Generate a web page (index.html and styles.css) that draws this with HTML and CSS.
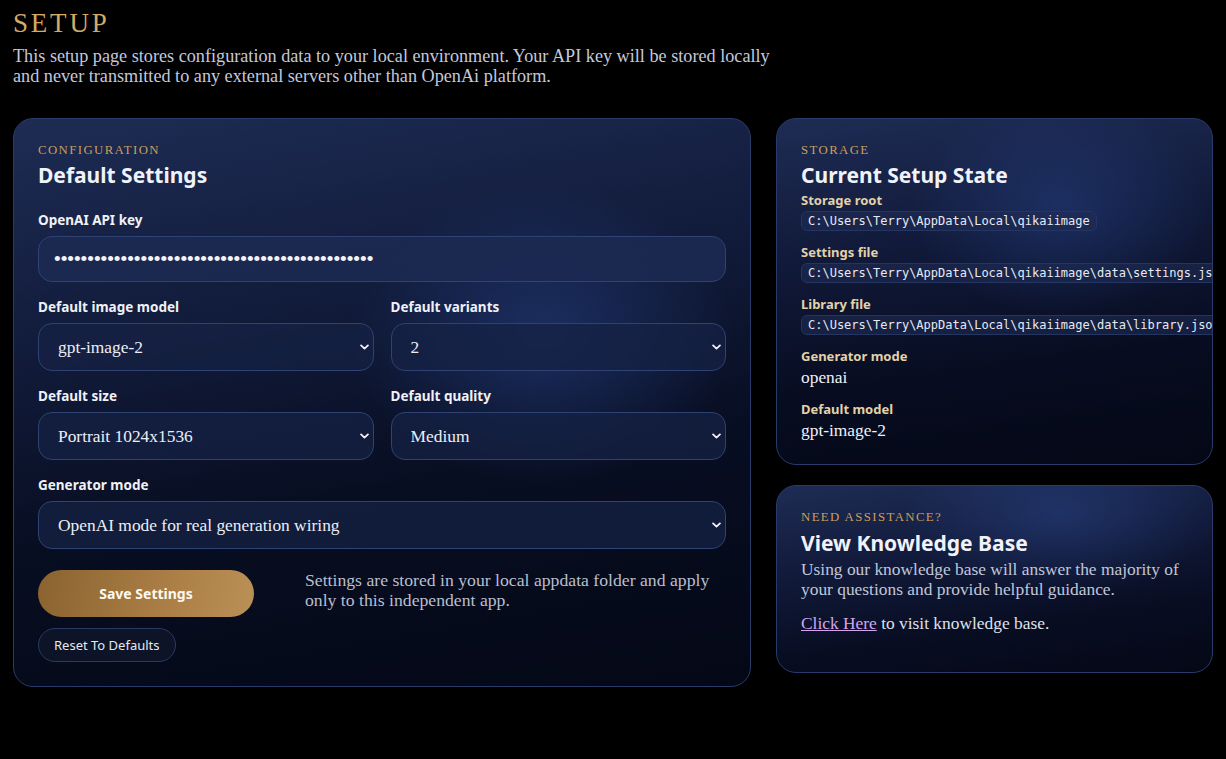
FILE: index.html
```html
<!DOCTYPE html>
<html lang="en">
<head>
<meta charset="utf-8">
<title>Setup</title>
<link rel="stylesheet" href="styles.css">
</head>
<body>
<header class="page-head">
  <h1 class="page-title">SETUP</h1>
  <p class="page-intro">This setup page stores configuration data to your local environment. Your API key will be stored locally and never transmitted to any external servers other than OpenAi platform.</p>
</header>
<main class="layout">
  <section class="card card-config">
    <div class="eyebrow">CONFIGURATION</div>
    <h2 class="card-title">Default Settings</h2>
    <div class="field field-first">
      <label class="field-label">OpenAI API key</label>
      <input class="text-input" type="password" value="sk-proj-abcdefghijklmnopqrstuvwxyz0123456789ABCD">
    </div>
    <div class="field-row">
      <div class="field">
        <label class="field-label">Default image model</label>
        <div class="select-wrap">
          <select class="select"><option>gpt-image-2</option></select>
          <svg class="chev" viewBox="0 0 10 6" width="9" height="6"><path d="M1.2 1.2l3.8 3.6 3.8-3.6" fill="none" stroke="currentColor" stroke-width="2" stroke-linecap="round" stroke-linejoin="round"/></svg>
        </div>
      </div>
      <div class="field">
        <label class="field-label">Default variants</label>
        <div class="select-wrap">
          <select class="select"><option>2</option></select>
          <svg class="chev" viewBox="0 0 10 6" width="9" height="6"><path d="M1.2 1.2l3.8 3.6 3.8-3.6" fill="none" stroke="currentColor" stroke-width="2" stroke-linecap="round" stroke-linejoin="round"/></svg>
        </div>
      </div>
    </div>
    <div class="field-row">
      <div class="field">
        <label class="field-label">Default size</label>
        <div class="select-wrap">
          <select class="select"><option>Portrait 1024x1536</option></select>
          <svg class="chev" viewBox="0 0 10 6" width="9" height="6"><path d="M1.2 1.2l3.8 3.6 3.8-3.6" fill="none" stroke="currentColor" stroke-width="2" stroke-linecap="round" stroke-linejoin="round"/></svg>
        </div>
      </div>
      <div class="field">
        <label class="field-label">Default quality</label>
        <div class="select-wrap">
          <select class="select"><option>Medium</option></select>
          <svg class="chev" viewBox="0 0 10 6" width="9" height="6"><path d="M1.2 1.2l3.8 3.6 3.8-3.6" fill="none" stroke="currentColor" stroke-width="2" stroke-linecap="round" stroke-linejoin="round"/></svg>
        </div>
      </div>
    </div>
    <div class="field">
      <label class="field-label">Generator mode</label>
      <div class="select-wrap">
        <select class="select"><option>OpenAI mode for real generation wiring</option></select>
        <svg class="chev" viewBox="0 0 10 6" width="9" height="6"><path d="M1.2 1.2l3.8 3.6 3.8-3.6" fill="none" stroke="currentColor" stroke-width="2" stroke-linecap="round" stroke-linejoin="round"/></svg>
      </div>
    </div>
    <div class="actions">
      <div class="buttons">
        <button class="btn-primary">Save Settings</button>
        <button class="btn-ghost">Reset To Defaults</button>
      </div>
      <p class="actions-note">Settings are stored in your local appdata folder and apply only to this independent app.</p>
    </div>
  </section>
  <aside class="side">
    <section class="card card-storage">
      <div class="eyebrow">STORAGE</div>
      <h2 class="card-title">Current Setup State</h2>
      <dl class="state">
        <dt class="state-label">Storage root</dt>
        <dd class="state-code"><code class="code">C:\Users\Terry\AppData\Local\qikaiimage</code></dd>
        <dt class="state-label">Settings file</dt>
        <dd class="state-code"><code class="code">C:\Users\Terry\AppData\Local\qikaiimage\data\settings.json</code></dd>
        <dt class="state-label">Library file</dt>
        <dd class="state-code"><code class="code">C:\Users\Terry\AppData\Local\qikaiimage\data\library.json</code></dd>
        <dt class="state-label">Generator mode</dt>
        <dd class="state-value">openai</dd>
        <dt class="state-label">Default model</dt>
        <dd class="state-value">gpt-image-2</dd>
      </dl>
    </section>
    <section class="card card-help">
      <div class="eyebrow">NEED ASSISTANCE?</div>
      <h2 class="card-title help-title">View Knowledge Base</h2>
      <p class="help-text">Using our knowledge base will answer the majority of your questions and provide helpful guidance.</p>
      <p class="help-text help-link-line"><a class="help-link" href="#">Click Here</a> to visit knowledge base.</p>
    </section>
  </aside>
</main>
</body>
</html>
```

FILE: styles.css
```css
* { box-sizing: border-box; }

html, body {
  margin: 0;
  background: #000;
}

body {
  padding: 0 13px;
  font-family: "Liberation Serif", Georgia, serif;
  color: #c9cfe0;
}

.page-head {
  padding-top: 7px;
}

.page-title {
  margin: 0;
  font-family: "Liberation Serif", Georgia, serif;
  font-weight: 400;
  font-size: 27px;
  line-height: 32px;
  letter-spacing: 2.8px;
  color: #d4ab66;
}

.page-intro {
  margin: 7px 0 0;
  max-width: 785px;
  font-size: 18.2px;
  line-height: 20px;
  color: #c3c9dc;
}

.layout {
  display: grid;
  grid-template-columns: 738px 437px;
  column-gap: 25px;
  margin-top: 32px;
  align-items: start;
}

.card {
  position: relative;
  border: 1px solid #2a3b6a;
  border-radius: 20px;
  padding: 23px 24px 24px;
  overflow: hidden;
}

.card-config {
  height: 569px;
  background:
    radial-gradient(ellipse 190px 150px at 72% 38%, rgba(36, 62, 128, 0.6), rgba(36, 62, 128, 0) 100%),
    linear-gradient(170deg, #1e2c54 0%, #121c3c 32%, #080e22 62%, #040816 100%);
}

.card-storage {
  height: 347px;
  padding-right: 0;
  background:
    radial-gradient(ellipse 150px 110px at 65% 25%, rgba(36, 62, 128, 0.55), rgba(36, 62, 128, 0) 100%),
    linear-gradient(172deg, #1e2c54 0%, #111a3a 35%, #070c20 70%, #040816 100%);
}

.card-help {
  height: 188px;
  background:
    radial-gradient(ellipse 160px 80px at 65% 15%, rgba(40, 66, 132, 0.55), rgba(40, 66, 132, 0) 100%),
    linear-gradient(172deg, #1e2c54 0%, #121b3c 35%, #080d22 70%, #040816 100%);
}

.eyebrow {
  font-family: "Liberation Serif", Georgia, serif;
  font-size: 12.8px;
  line-height: 16px;
  letter-spacing: 1.4px;
  color: #c99f5c;
}

.card-title {
  margin: 3px 0 0;
  font-family: "Noto Sans", "Open Sans", sans-serif;
  font-weight: 700;
  font-size: 21px;
  line-height: 28px;
  color: #f1f2f8;
}

.help-title {
  margin-top: 4px;
}

.field {
  display: flex;
  flex-direction: column;
  margin-top: 16px;
}

.field-first {
  margin-top: 22px;
}

.field-label {
  font-family: "Noto Sans", "Open Sans", sans-serif;
  font-weight: 700;
  font-size: 13.5px;
  line-height: 18px;
  color: #f0f1f6;
  margin-bottom: 7px;
}

.text-input {
  height: 46px;
  border: 1px solid #2f4274;
  border-radius: 14px;
  background: rgba(28, 42, 82, 0.85);
  color: #f3f3f7;
  padding: 0 15px;
  font-family: "Liberation Sans", Arial, sans-serif;
  font-size: 19px;
  outline: none;
}

.field-row {
  display: grid;
  grid-template-columns: 1fr 1fr;
  column-gap: 17px;
}

.field-row .field {
  margin-top: 16px;
}

.select-wrap {
  position: relative;
}

.select {
  width: 100%;
  height: 48px;
  appearance: none;
  -webkit-appearance: none;
  border: 1px solid #2f4274;
  border-radius: 14px;
  background: rgba(22, 34, 68, 0.75);
  color: #eceef6;
  padding: 0 30px 0 19px;
  font-family: "Liberation Serif", Georgia, serif;
  font-size: 17.4px;
  outline: none;
}

.chev {
  position: absolute;
  right: 5px;
  top: 21px;
  color: #f2f2f6;
  pointer-events: none;
}

.actions {
  display: grid;
  grid-template-columns: 216px 1fr;
  column-gap: 51px;
  margin-top: 21px;
}

.buttons {
  display: flex;
  flex-direction: column;
  align-items: flex-start;
  gap: 11px;
}

.btn-primary {
  width: 216px;
  height: 47px;
  border: 0;
  border-radius: 24px;
  background: linear-gradient(100deg, #8a6330 0%, #a67a42 50%, #bb9056 100%);
  color: #fdf8ef;
  font-family: "Noto Sans", "Open Sans", sans-serif;
  font-weight: 700;
  font-size: 14px;
}

.btn-ghost {
  height: 34px;
  padding: 0 15px;
  border: 1px solid #2a3a66;
  border-radius: 17px;
  background: #0d1428;
  color: #e6e8f0;
  font-family: "Noto Sans", "Open Sans", sans-serif;
  font-size: 13px;
}

.actions-note {
  margin: 0;
  font-size: 17.7px;
  line-height: 20px;
  color: #b8bed0;
}

.side {
  display: flex;
  flex-direction: column;
  gap: 20px;
}

.state {
  margin: 3px 0 0;
}

.state-label {
  font-family: "Noto Sans", "Open Sans", sans-serif;
  font-weight: 700;
  font-size: 13px;
  line-height: 16px;
  color: #e2d2aa;
}

.state-code {
  margin: 3px 0 13px;
  white-space: nowrap;
}

.code {
  display: inline-block;
  padding: 0 6px;
  border: 1px solid #25355f;
  border-radius: 6px;
  background: rgba(30, 44, 84, 0.6);
  font-family: "DejaVu Sans Mono", monospace;
  font-size: 12px;
  line-height: 18px;
  color: #e8eaf2;
}

.state-value {
  margin: 3px 0 14px;
  font-size: 17.4px;
  line-height: 20px;
  color: #eef0f6;
}

.help-text {
  margin: 2px 0 0;
  font-size: 17.4px;
  line-height: 20px;
  color: #c0c6d8;
}

.help-link-line {
  margin-top: 14px;
  color: #dfe2ec;
}

.help-link {
  color: #d4a5ee;
  text-decoration: underline;
}
```
